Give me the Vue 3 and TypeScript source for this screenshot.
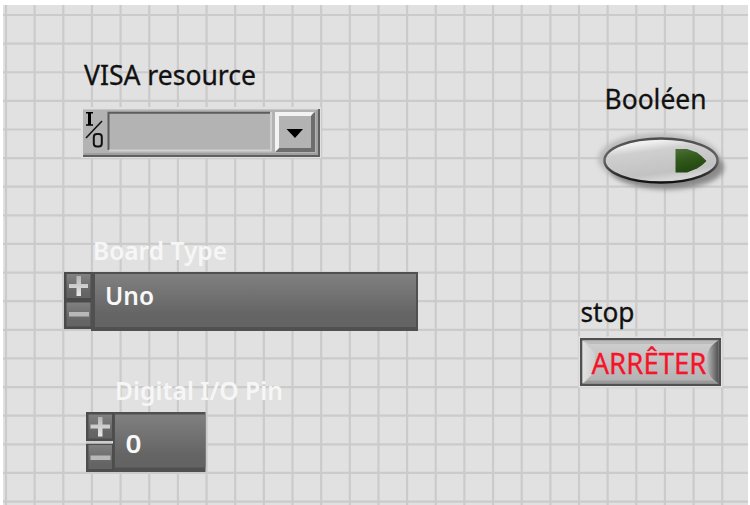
<script setup lang="ts">
const step = 28.65
const columns: number[] = Array.from({ length: 26 }, (_, i) => 6 + i * step)
const rows: number[] = Array.from({ length: 18 }, (_, i) => 15 + i * 28.62)
</script>

<template>
  <main class="window">
    <section class="panel">
      <svg class="grid" width="745" height="500" viewBox="3 5 745 500">
        <line v-for="x in columns" :key="'c' + x" :x1="x" :x2="x" y1="5" y2="505" />
        <line v-for="y in rows" :key="'r' + y" x1="3" x2="748" :y1="y" :y2="y" />
      </svg>

      <!-- VISA resource selector -->
      <svg class="control visa" width="250" height="118" viewBox="75 45 250 118">
        <text class="label" x="84" y="85" textLength="172" lengthAdjust="spacingAndGlyphs">VISA resource</text>
        <rect x="81" y="107" width="240" height="51" fill="#e0e0e0" />
        <rect x="83" y="109" width="237" height="48" fill="#b3b3b3" />
        <path d="M83 109.5H319" stroke="#c6c6c6" />
        <path d="M83 156H319V109" fill="none" stroke="#5f5f5f" stroke-width="2" />
        <path d="M84 154H317V110" fill="none" stroke="#999" stroke-width="1.4" />
        <path d="M108.5 150V112.8H270" fill="none" stroke="#5d5d5d" stroke-width="2" />
        <path d="M109 150.5H271V112" fill="none" stroke="#d0d0d0" stroke-width="2" />
        <path d="M86 112.7H93M86 125H93" fill="none" stroke="#000" stroke-width="1.6" />
        <path d="M89.5 112V125" stroke="#000" stroke-width="3" />
        <path d="M86 138L102 121" stroke="#111" stroke-width="1.6" />
        <rect x="93.8" y="134" width="8" height="12.5" rx="3" fill="none" stroke="#111" stroke-width="2" />
        <path d="M275 112H314V152H275Z" fill="#b3b3b3" />
        <path d="M275 152H315V112L311 115V148H279Z" fill="#6d6d6d" />
        <path d="M275 152V112H314L311 116H279V148Z" fill="#f3f3f3" />
        <path d="M286.5 129H303L295 138Z" fill="#000" />
      </svg>

      <!-- Boolean push button -->
      <svg class="control boolean" width="155" height="135" viewBox="592 68 155 135">
        <defs>
          <linearGradient id="face" x1="0" y1="0" x2=".35" y2="1">
            <stop offset="0" stop-color="#fff" />
            <stop offset=".2" stop-color="#f0f0f0" />
            <stop offset=".38" stop-color="#cfcfcf" />
            <stop offset=".85" stop-color="#c2c2c2" />
            <stop offset="1" stop-color="#d6d6d6" />
          </linearGradient>
          <linearGradient id="rim" x1="0" y1="0" x2="0" y2="1">
            <stop offset="0" stop-color="#4d4d4d" />
            <stop offset=".5" stop-color="#666" />
            <stop offset="1" stop-color="#111" />
          </linearGradient>
          <linearGradient id="led" x1="0" y1="0" x2="0.3" y2="1">
            <stop offset="0" stop-color="#4d7038" />
            <stop offset=".5" stop-color="#31581a" />
            <stop offset="1" stop-color="#244710" />
          </linearGradient>
          <filter id="soft" x="-20%" y="-30%" width="140%" height="170%"><feGaussianBlur stdDeviation="2.5" /></filter>
          <filter id="edge"><feGaussianBlur stdDeviation=".6" /></filter>
        </defs>
        <text class="label" x="604.5" y="109" textLength="102" lengthAdjust="spacingAndGlyphs">Booléen</text>
        <ellipse cx="659" cy="159" rx="61" ry="26" fill="#bbb" filter="url(#soft)" />
        <ellipse cx="667" cy="167.5" rx="57" ry="22" fill="#777" opacity=".8" filter="url(#soft)" />
        <ellipse cx="661" cy="160.5" rx="56.5" ry="22" fill="url(#face)" stroke="url(#rim)" stroke-width="2.5" />
        <path d="M675.5 149H687L697 152.5Q702 156 706.5 161Q702 166 697 168.5L687 172.5H675.5Z" fill="url(#led)" filter="url(#edge)" />
      </svg>

      <!-- Board type ring -->
      <svg class="control board" width="365" height="115" viewBox="60 220 365 115">
        <defs>
          <linearGradient id="steel" x1="0" y1="0" x2="0" y2="1">
            <stop offset="0" stop-color="#808080" />
            <stop offset=".75" stop-color="#656565" />
            <stop offset="1" stop-color="#636363" />
          </linearGradient>
          <linearGradient id="mark" x1="0" y1="0" x2="0" y2="1">
            <stop offset="0" stop-color="#b5b5b5" />
            <stop offset="1" stop-color="#e8e8e8" />
          </linearGradient>
        </defs>
        <text class="pale" x="93" y="259.5" textLength="134" lengthAdjust="spacingAndGlyphs">Board Type</text>
        <rect x="64" y="272" width="30" height="57" fill="#4a4a4a" />
        <rect x="91" y="272" width="327" height="59" fill="#505050" />
        <rect x="95" y="274" width="321" height="53" fill="url(#steel)" />
        <rect x="66.5" y="274" width="24" height="24" fill="url(#steel)" />
        <rect x="66.5" y="302.5" width="24" height="24" fill="url(#steel)" />
        <path d="M76.5 276H81V284H88V288H81V296H76.5V288H69V284H76.5Z" fill="url(#mark)" />
        <rect x="69" y="312" width="20" height="4.5" fill="#b8b8b8" />
        <text class="value" x="105" y="304.5" textLength="49" lengthAdjust="spacingAndGlyphs">Uno</text>
      </svg>

      <!-- Digital pin numeric -->
      <svg class="control pin" width="215" height="120" viewBox="80 360 215 120">
        <text class="pale" x="115" y="400" textLength="168" lengthAdjust="spacingAndGlyphs">Digital I/O Pin</text>
        <rect x="113" y="412" width="92.5" height="60" fill="#505050" />
        <rect x="115" y="414.5" width="90.5" height="53" fill="url(#steel)" />
        <rect x="86" y="412" width="28" height="29" fill="#4d4d4d" />
        <rect x="86" y="443.5" width="28" height="28.5" fill="#4d4d4d" />
        <rect x="88.5" y="414.5" width="23.5" height="24" fill="url(#steel)" />
        <rect x="88.5" y="445" width="23.5" height="24" fill="url(#steel)" />
        <rect x="86" y="441" width="26.5" height="2.5" fill="#ccc" />
        <path d="M98 417H102.5V424.5H110V428.5H102.5V436.5H98V428.5H90.5V424.5H98Z" fill="url(#mark)" />
        <rect x="90.5" y="455.5" width="20" height="4.5" fill="#b8b8b8" />
        <text class="value" x="125.5" y="452.5" textLength="16" lengthAdjust="spacingAndGlyphs">0</text>
      </svg>

      <!-- Stop button -->
      <svg class="control halt" width="155" height="115" viewBox="573 276 155 115">
        <defs>
          <linearGradient id="plate" x1="0" y1="0" x2="0" y2="1">
            <stop offset="0" stop-color="#d0d0d0" />
            <stop offset="1" stop-color="#b1b1b1" />
          </linearGradient>
          <linearGradient id="shade" x1="0" y1="0" x2="1" y2="0">
            <stop offset="0" stop-color="#bababa" />
            <stop offset="1" stop-color="#505050" />
          </linearGradient>
          <linearGradient id="shine" x1="0" y1="0" x2="1" y2="0">
            <stop offset="0" stop-color="#e2e2e2" />
            <stop offset="1" stop-color="#cecece" />
          </linearGradient>
        </defs>
        <text class="label" x="580.5" y="321.5" textLength="54" lengthAdjust="spacingAndGlyphs">stop</text>
        <rect x="578.5" y="336.5" width="144" height="51" fill="#e1e1e1" />
        <rect x="580" y="338" width="141" height="48" fill="#505050" />
        <rect x="582.5" y="340.5" width="136" height="43" fill="url(#plate)" />
        <path d="M582.5 340.5H718L712 344H589Z" fill="#bcbcbc" />
        <path d="M582.5 340.5L595 353V372L582.5 383.5Z" fill="url(#shine)" />
        <path d="M718.5 340.5Q706 347 707 362Q706 376 718.5 383.5Z" fill="url(#shade)" />
        <path d="M583 383.5L588 380.5H713L718.5 383.5Z" fill="#999" />
        <text class="label red" x="591.5" y="374" textLength="115" lengthAdjust="spacingAndGlyphs">ARRÊTER</text>
      </svg>
    </section>
  </main>
</template>

<style>
body {
  margin: 0;
  background: #fff;
}
</style>

<style scoped>
.window {
  box-sizing: border-box;
  width: 750px;
  height: 505px;
  padding: 5px 2px 0 3px;
  overflow: hidden;
  background: #fff;
}
.panel {
  position: relative;
  width: 745px;
  height: 500px;
  background: #e1e1e1;
  overflow: hidden;
}
svg {
  display: block;
}
.grid line {
  stroke: #cbcbcb;
  stroke-width: 2.2;
}
.control {
  position: absolute;
  overflow: visible;
}
.visa {
  left: 72px;
  top: 40px;
}
.boolean {
  left: 589px;
  top: 63px;
}
.board {
  left: 57px;
  top: 215px;
}
.pin {
  left: 77px;
  top: 355px;
}
.halt {
  left: 570px;
  top: 271px;
}
text {
  font-family: "Noto Sans", "Open Sans", sans-serif;
}
.label {
  font-size: 28px;
  fill: #111;
  stroke: #111;
  stroke-width: 0.3px;
}
.red {
  font-size: 29px;
  fill: #f5142a;
  stroke: #f5142a;
}
.pale {
  font-size: 26px;
  font-weight: 600;
  fill: #f6f6f6;
}
.value {
  font-size: 26px;
  font-weight: 600;
  fill: #f8f8f8;
}
</style>
